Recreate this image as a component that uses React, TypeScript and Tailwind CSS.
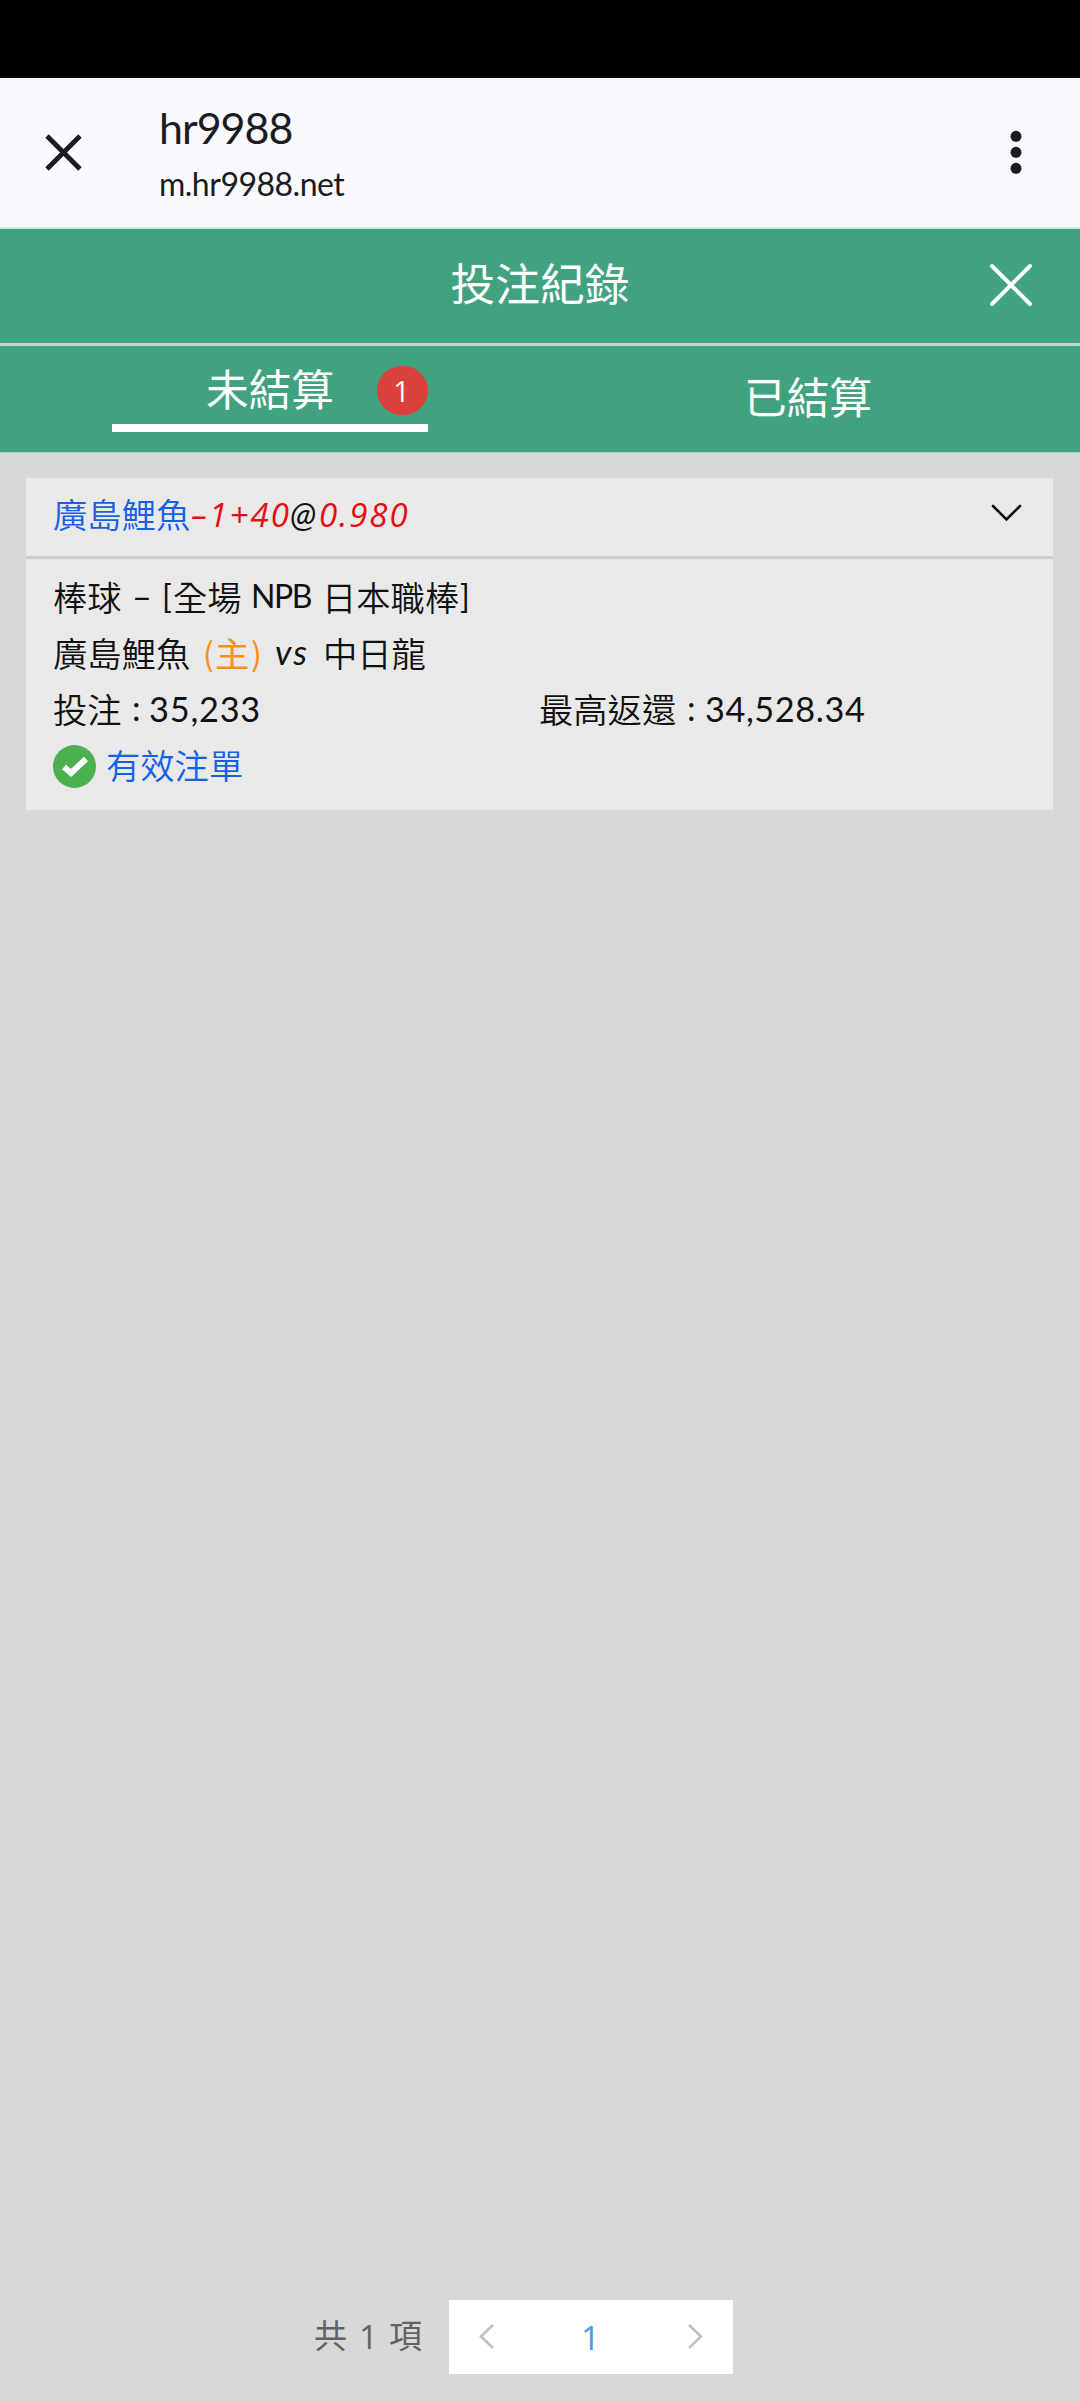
import { ReactNode } from 'react';

function Run({ className, children }: { className: string; children: ReactNode }) {
  return <span className={`inline-block shrink-0 whitespace-pre ${className}`}>{children}</span>;
}

function BrowserBar() {
  return (
    <div className="flex h-[149px] bg-[#f9f9ff] text-[#1b1b21]">
      <svg className="mt-[55px] ml-[44px] size-10 shrink-0" viewBox="0 0 40 40" fill="none" stroke="currentColor" strokeWidth="4.8">
        <path d="M3 3 L36 36 M36 3 L3 36" />
      </svg>
      <div className="ml-[75px] flex flex-1 flex-col pt-[21px] font-[Lato]">
        <div className="h-[58px] text-[43px] leading-[57px] tracking-[-1px]">hr9988</div>
        <div className="h-[52px] text-[32px] leading-[54px] tracking-[-0.5px]">m.hr9988.net</div>
      </div>
      <svg className="mt-[50px] mr-[58px] h-[50px] w-[12px] shrink-0" viewBox="0 0 12 50" fill="currentColor">
        <circle cx="6" cy="8.3" r="5.5" />
        <circle cx="6" cy="24.3" r="5.5" />
        <circle cx="6" cy="40.3" r="5.5" />
      </svg>
    </div>
  );
}

function TitleBar() {
  return (
    <div className="flex h-[119px] items-start border-t-2 border-b-3 border-t-[#cfe9df] border-b-[#bfd3cb] bg-[#41a280] text-white">
      <div className="w-[150px]" />
      <h1 className="h-[112px] flex-1 text-center text-[44.7px] leading-[105px]">投注紀錄</h1>
      <button className="mt-[34px] mr-[47px] ml-[59px] size-11">
        <svg viewBox="0 0 44 44" fill="none" stroke="currentColor" strokeWidth="4" strokeLinecap="round">
          <path d="M3 3 L41 41 M41 3 L3 41" />
        </svg>
      </button>
    </div>
  );
}

function Tabs() {
  return (
    <div className="flex h-[107px] border-b border-[#a9cfc0] bg-[#41a280] text-[42.7px] text-white">
      <div className="flex w-1/2 pl-[112px]">
        <div className="mt-[10px] flex h-[76px] w-[316px] border-b-8 border-white">
          <span className="ml-[94px] w-[130px] leading-[63px]">未結算</span>
          <span className="mt-[10px] ml-auto flex h-[49px] w-[51px] items-center justify-center rounded-full bg-[#db423c] pr-[2px] font-['Open_Sans'] text-[29px]">1</span>
        </div>
      </div>
      <div className="w-1/2 pr-1 text-center leading-[99px]">已結算</div>
    </div>
  );
}

function BetCard() {
  return (
    <div className="mr-[27px] ml-[26px] mt-[25px] h-[332px] bg-[#e9e9e9] text-[34.3px] font-[350] text-[#111]">
      <div className="flex h-[81px] border-b-3 border-[#cdcdcd] pl-[27px] leading-[71px]">
        <Run className="w-[138px] text-[#1660e6]">廣島鯉魚</Run>
        <Run className="w-[99px] font-['Open_Sans'] text-[33px] leading-[74px] font-normal tracking-[2.2px] text-[#e60d12] italic">–1+40</Run>
        <Run className="w-[29px] font-[Lato] text-[34px] font-normal tracking-[-1px] italic">@</Run>
        <Run className="font-['Open_Sans'] text-[33px] leading-[74px] font-normal tracking-[1.9px] text-[#e60d12] italic">0.980</Run>
        <svg className="mt-[26px] mr-[31px] ml-auto h-[18px] w-[31px]" viewBox="0 0 31 18" fill="none" stroke="currentColor" strokeWidth="2.6" strokeLinecap="round">
          <path d="M2 2 L15.5 15.5 L29 2" />
        </svg>
      </div>
      <div className="pt-[9px] pl-[27px] leading-[56px]">
        <div className="flex h-14">
          <Run className="w-[79px]">棒球</Run>
          <Run className="w-[30px] font-[Lato] font-normal">–</Run>
          <Run className="w-[11px] font-[Lato] text-[32px] font-normal">[</Run>
          <Run className="w-[78px]">全場</Run>
          <Run className="w-[71px] font-[Lato] text-[32px] font-normal tracking-[-1.5px]">NPB</Run>
          <Run className="w-[138px]">日本職棒</Run>
          <Run className="font-[Lato] text-[32px] font-normal">]</Run>
        </div>
        <div className="flex h-14">
          <Run className="w-[150px]">廣島鯉魚</Run>
          <Run className="w-[12px] text-[32px] font-normal text-[#f98e12]">(</Run>
          <Run className="w-[36px] font-normal text-[#f98e12]">主</Run>
          <Run className="w-[24px] text-[32px] font-normal text-[#f98e12]">)</Run>
          <Run className="w-[48px] font-[Lato] font-normal tracking-[2px] italic">vs</Run>
          <Run className="">中日龍</Run>
        </div>
        <div className="flex h-14">
          <Run className="w-[79px]">投注</Run>
          <Run className="w-[17px] font-[Lato] font-normal">:</Run>
          <Run className="w-[390px] font-[Lato] leading-[58px] font-normal tracking-[0.8px]">35,233</Run>
          <Run className="w-[148px]">最高返還</Run>
          <Run className="w-[18px] font-[Lato] font-normal">:</Run>
          <Run className="font-[Lato] leading-[58px] font-normal tracking-[0.6px]">34,528.34</Run>
        </div>
        <div className="flex h-14">
          <svg className="mt-[9px] mr-[10px] size-[43px]" viewBox="0 0 43 43">
            <circle cx="21.5" cy="21.5" r="21.5" fill="#4bb050" />
            <path d="M11 22 L18 28 L33 14" fill="none" stroke="#fff" strokeWidth="6" />
          </svg>
          <span className="text-[#1660e6]">有效注單</span>
        </div>
      </div>
    </div>
  );
}

function Pager() {
  return (
    <div className="mt-auto mb-[26px] ml-[314px] flex h-[75px] text-[33px] leading-[69px] text-[#606266]">
      <Run className="w-[45px]">共</Run>
      <Run className="w-[30px] font-['Open_Sans'] leading-[74px]">1</Run>
      <Run className="w-[60px]">項</Run>
      <div className="mb-px flex w-[284px] items-center justify-between bg-white px-[30px]">
        <svg className="h-[28px] w-[16px]" viewBox="0 0 16 28" fill="none" stroke="#bdc0c6" strokeWidth="2.6">
          <path d="M14 2 L2 13.5 L14 25" />
        </svg>
        <span className="pr-px font-['Open_Sans'] font-medium text-[#4a9be8]">1</span>
        <svg className="h-[28px] w-[16px]" viewBox="0 0 16 28" fill="none" stroke="#bdc0c6" strokeWidth="2.6">
          <path d="M2 2 L14 13.5 L2 25" />
        </svg>
      </div>
    </div>
  );
}

export default function App() {
  return (
    <div className="flex h-[2401px] w-[1080px] flex-col bg-[#d8d8d8] font-['Noto_Sans_CJK_TC',sans-serif]">
      <div className="h-[78px] bg-black" />
      <BrowserBar />
      <TitleBar />
      <Tabs />
      <BetCard />
      <Pager />
    </div>
  );
}
